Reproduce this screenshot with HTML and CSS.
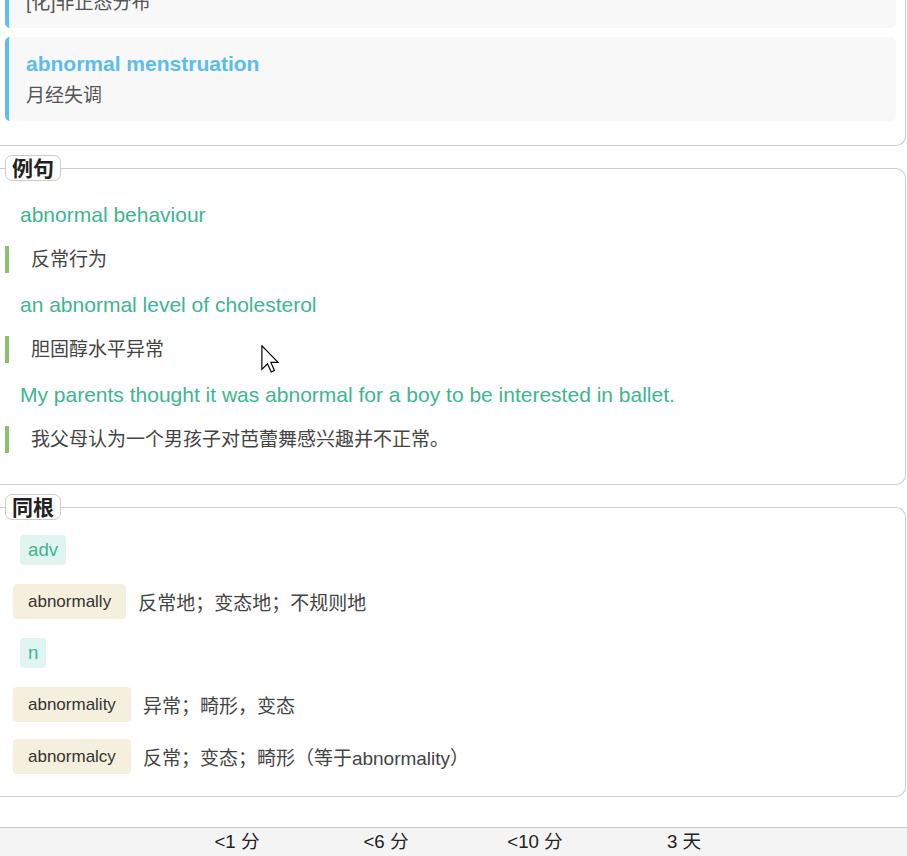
FILE: index.html
```html
<!DOCTYPE html>
<html lang="zh">
<head>
<meta charset="utf-8">
<title>abnormal</title>
<link rel="stylesheet" href="styles.css">
</head>
<body>
<div class="page">
  <fieldset class="sect sect-first">
    <div class="card">
      <div class="card-en">abnormal distribution</div>
      <div class="card-cn">[化]非正态分布</div>
    </div>
    <div class="card">
      <div class="card-en">abnormal menstruation</div>
      <div class="card-cn">月经失调</div>
    </div>
  </fieldset>

  <fieldset class="sect sect-ex">
    <legend class="tag-title">例句</legend>
    <div class="ex-en">abnormal behaviour</div>
    <div class="ex-cn">反常行为</div>
    <div class="ex-en">an abnormal level of cholesterol</div>
    <div class="ex-cn">胆固醇水平异常</div>
    <div class="ex-en">My parents thought it was abnormal for a boy to be interested in ballet.</div>
    <div class="ex-cn">我父母认为一个男孩子对芭蕾舞感兴趣并不正常。</div>
  </fieldset>

  <fieldset class="sect sect-rel">
    <legend class="tag-title">同根</legend>
    <div class="pos"><span class="pos-tag">adv</span></div>
    <div class="rel-row"><span class="word-tag">abnormally</span><span class="rel-def">反常地；变态地；不规则地</span></div>
    <div class="pos"><span class="pos-tag">n</span></div>
    <div class="rel-row rel-row-a"><span class="word-tag">abnormality</span><span class="rel-def">异常；畸形，变态</span></div>
    <div class="rel-row"><span class="word-tag">abnormalcy</span><span class="rel-def">反常；变态；畸形（等于abnormality）</span></div>
  </fieldset>
</div>

<div class="footer">
  <span class="due">&lt;1 分</span>
  <span class="due">&lt;6 分</span>
  <span class="due">&lt;10 分</span>
  <span class="due">3 天</span>
</div>

<svg class="cursor" width="18" height="28" viewBox="0 0 12 19" aria-hidden="true">
  <path d="M0.5 0.5 L0.5 16.5 L4.3 12.7 L6.8 18.3 L9 17.3 L6.6 11.8 L11.5 11.8 Z" fill="#fff" stroke="#000" stroke-width="0.8" stroke-linejoin="miter"/>
</svg>
</body>
</html>
```
FILE: styles.css
```css
html, body {
  margin: 0;
  padding: 0;
  height: 856px;
  overflow: hidden;
  background: #fff;
}

body {
  display: flex;
  flex-direction: column;
  font-family: "Liberation Sans", "Noto Sans CJK SC", sans-serif;
  color: #333;
  position: relative;
}

.page {
  display: flex;
  flex-direction: column;
}

.sect {
  margin: 9px 1px 0 0;
  padding: 0 9px 0 5px;
  min-width: 0;
  border: 1px solid #cccccc;
  border-left: none;
  border-radius: 0 10px 10px 0;
}

.sect-first {
  margin-top: -56px;
  border-top: none;
  padding-bottom: 24px;
  display: flex;
  flex-direction: column;
  gap: 9px;
}

.card {
  background: #f8f8f8;
  border-left: 4px solid #5bc0ee;
  border-radius: 5px;
  padding: 13px 12px 12px 17px;
  height: 84px;
  box-sizing: border-box;
}

.card-en {
  font-weight: bold;
  font-size: 21px;
  line-height: 28px;
  color: #5bbdeb;
  margin-bottom: 5px;
}

.card-cn {
  font-size: 19px;
  line-height: 26px;
  color: #555;
}

.tag-title {
  margin: 0;
  padding: 1px 6px 0;
  border: 1px solid #cccccc;
  border-radius: 7px;
  font-weight: bold;
  font-size: 21px;
  line-height: 23px;
  color: #222;
}

.sect-ex {
  padding-top: 20px;
  padding-bottom: 31px;
}

.ex-en {
  margin: 0 0 17px 15px;
  font-size: 21px;
  line-height: 28px;
  color: #3db68f;
}

.ex-cn {
  margin: 0 0 18px 0;
  border-left: 4px solid #8cc16b;
  padding-left: 22px;
  font-size: 19px;
  line-height: 27px;
  color: #444;
}

.ex-cn:last-child {
  margin-bottom: 0;
}

.sect-rel {
  padding-top: 15px;
  padding-bottom: 22px;
}

.pos {
  margin: 0 0 19px 15px;
  display: flex;
}

.pos-tag {
  background: #e1f5f0;
  color: #3db68f;
  font-size: 18.67px;
  line-height: 30px;
  padding: 0 8px;
  border-radius: 4px;
}

.rel-row {
  display: flex;
  align-items: center;
  gap: 12px;
  margin: 0 0 19px 8px;
}

.rel-row-a {
  margin-bottom: 17px;
}

.rel-row:last-child {
  margin-bottom: 0;
}

.word-tag {
  background: #f5f0de;
  color: #333;
  font-size: 17px;
  line-height: 35px;
  padding: 0 15px;
  border-radius: 4px;
}

.rel-def {
  font-size: 19px;
  color: #444;
}

.footer {
  margin-top: auto;
  height: 28px;
  border-top: 1px solid #cccccc;
  background: #f4f4f4;
  display: flex;
  justify-content: center;
  align-items: center;
  padding-left: 14px;
}

.due {
  width: 149px;
  text-align: center;
  font-size: 18.67px;
  line-height: 28px;
  color: #222;
}

.cursor {
  position: absolute;
  left: 261px;
  top: 345px;
}
```
